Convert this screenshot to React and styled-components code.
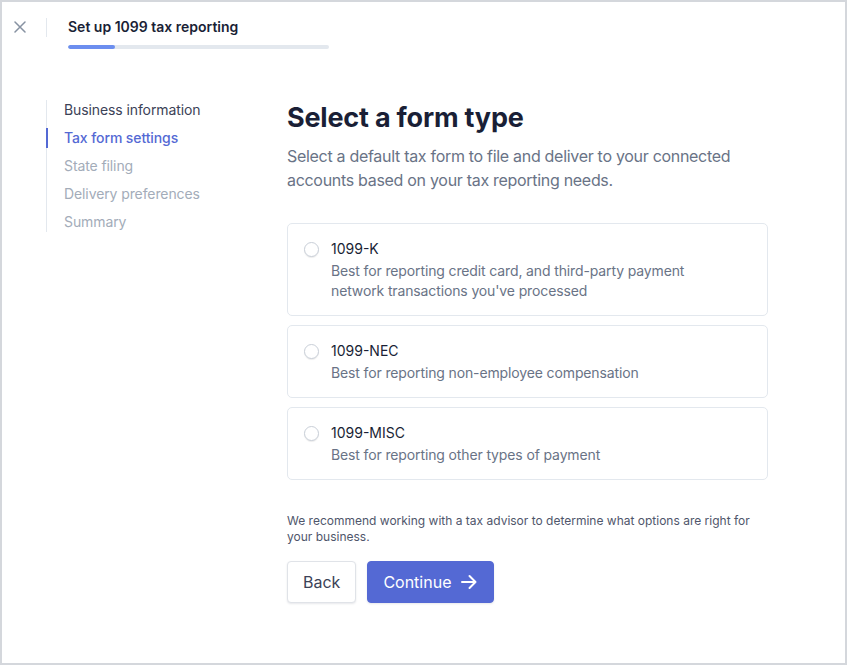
import styled, { createGlobalStyle } from "styled-components";

const GlobalStyle = createGlobalStyle`
  * { box-sizing: border-box; }
  body {
    margin: 0;
    font-family: Inter, "Noto Sans", "Liberation Sans", sans-serif;
    color: #1a1f36;
    background: #fff;
  }
`;

const steps = [
  { label: "Business information", state: "done" },
  { label: "Tax form settings", state: "active" },
  { label: "State filing", state: "todo" },
  { label: "Delivery preferences", state: "todo" },
  { label: "Summary", state: "todo" },
];

const forms = [
  {
    name: "1099-K",
    text: "Best for reporting credit card, and third-party payment network transactions you've processed",
  },
  { name: "1099-NEC", text: "Best for reporting non-employee compensation" },
  { name: "1099-MISC", text: "Best for reporting other types of payment" },
];

export default function App() {
  return (
    <>
      <GlobalStyle />
      <Frame>
        <Header>
          <CloseButton aria-label="Close">
            <svg width="12" height="12" viewBox="0 0 12 12">
              <path d="M1 1L11 11M11 1L1 11" stroke="#8792a2" strokeWidth="1.5" strokeLinecap="round" />
            </svg>
          </CloseButton>
          <Divider />
          <TitleBlock>
            <Title>Set up 1099 tax reporting</Title>
            <Progress>
              <ProgressFill style={{ width: "18%" }} />
            </Progress>
          </TitleBlock>
        </Header>

        <Body>
          <StepList>
            {steps.map((s) => (
              <Step key={s.label} $state={s.state}>
                {s.label}
              </Step>
            ))}
          </StepList>

          <Main>
            <Heading>Select a form type</Heading>
            <Lead>
              Select a default tax form to file and deliver to your connected
              accounts based on your tax reporting needs.
            </Lead>

            <Options>
              {forms.map((f) => (
                <Option key={f.name}>
                  <Radio type="radio" name="form" />
                  <OptionText>
                    <OptionName>{f.name}</OptionName>
                    <OptionDesc>{f.text}</OptionDesc>
                  </OptionText>
                </Option>
              ))}
            </Options>

            <Note>
              We recommend working with a tax advisor to determine what options
              are right for your business.
            </Note>

            <Actions>
              <Button>Back</Button>
              <Button $primary>
                Continue
                <svg width="18" height="18" viewBox="0 0 18 18">
                  <path
                    d="M2 9H15.5M9.5 3L15.5 9L9.5 15"
                    fill="none"
                    stroke="#fff"
                    strokeWidth="2"
                    strokeLinecap="round"
                    strokeLinejoin="round"
                  />
                </svg>
              </Button>
            </Actions>
          </Main>
        </Body>
      </Frame>
    </>
  );
}

const Frame = styled.div`
  width: 847px;
  height: 665px;
  border: 2px solid #d4d7dc;
  background: #fff;
`;

const Header = styled.header`
  display: flex;
  align-items: flex-start;
  padding: 15px 0 0 12px;
`;

const CloseButton = styled.button`
  border: 0;
  background: none;
  padding: 0;
  width: 12px;
  height: 20px;
  display: flex;
  align-items: center;
  margin-right: 20px;
`;

const Divider = styled.div`
  width: 1px;
  height: 19px;
  margin-top: 1px;
  background: #e3e8ee;
  margin-right: 21px;
`;

const TitleBlock = styled.div`
  display: flex;
  flex-direction: column;
  gap: 8px;
`;

const Title = styled.h1`
  margin: 0;
  font-size: 14px;
  line-height: 20px;
  font-weight: 600;
  color: #1a1f36;
`;

const Progress = styled.div`
  width: 261px;
  height: 4px;
  border-radius: 2px;
  background: #e3e8ee;
  overflow: hidden;
`;

const ProgressFill = styled.div`
  height: 100%;
  background: #6c8eef;
  border-radius: 2px;
`;

const Body = styled.div`
  display: grid;
  grid-template-columns: 241px 481px;
  padding: 51px 0 0 44px;
`;

const StepList = styled.nav`
  align-self: start;
  display: flex;
  flex-direction: column;
  gap: 8px;
  border-left: 1px solid #e3e8ee;
`;

const Step = styled.div`
  margin-left: -1px;
  border-left: 2px solid ${(p) => (p.$state === "active" ? "#5469d4" : "transparent")};
  padding-left: 16px;
  font-size: 14px;
  line-height: 20px;
  letter-spacing: -0.1px;
  color: ${(p) =>
    p.$state === "active" ? "#5469d4" : p.$state === "done" ? "#3c4257" : "#a3acb9"};
  font-weight: ${(p) => (p.$state === "active" ? 500 : 400)};
`;

const Main = styled.main`
  display: flex;
  flex-direction: column;
`;

const Heading = styled.h2`
  margin: 0;
  font-size: 27px;
  line-height: 36px;
  font-weight: 700;
  color: #1a1f36;
  letter-spacing: -0.2px;
`;

const Lead = styled.p`
  margin: 8px 0 0;
  font-size: 16px;
  line-height: 24px;
  letter-spacing: -0.3px;
  color: #697386;
`;

const Options = styled.div`
  margin-top: 31px;
  display: flex;
  flex-direction: column;
  gap: 9px;
`;

const Option = styled.label`
  display: flex;
  align-items: flex-start;
  gap: 12px;
  padding: 15px 16px 14px 16px;
  border: 1px solid #e3e8ee;
  border-radius: 5px;
  cursor: pointer;
`;

const Radio = styled.input`
  appearance: none;
  margin: 3px 0 0 0;
  width: 15px;
  height: 15px;
  border-radius: 50%;
  border: 1px solid #c9cfd8;
  box-shadow: 0 1px 1px rgba(0, 0, 0, 0.08);
  background: #fff;
  flex-shrink: 0;
`;

const OptionText = styled.div`
  display: flex;
  flex-direction: column;
  gap: 2px;
`;

const OptionName = styled.div`
  font-size: 14px;
  line-height: 20px;
  font-weight: 400;
  color: #1a1f36;
`;

const OptionDesc = styled.div`
  font-size: 14px;
  line-height: 20px;
  letter-spacing: -0.13px;
  color: #697386;
  max-width: 370px;
`;

const Note = styled.p`
  margin: 33px 0 0;
  font-size: 12px;
  line-height: 16px;
  color: #4f566b;
`;

const Actions = styled.div`
  display: flex;
  gap: 11px;
  margin-top: 16px;
`;

const Button = styled.button`
  display: inline-flex;
  align-items: center;
  gap: 9px;
  height: 42px;
  padding: 0 15px;
  border-radius: 4px;
  font-family: inherit;
  font-size: 16px;
  font-weight: 400;
  cursor: pointer;
  border: 1px solid ${(p) => (p.$primary ? "#5469d4" : "#e0e3e8")};
  background: ${(p) => (p.$primary ? "#5469d4" : "#fff")};
  color: ${(p) => (p.$primary ? "#fff" : "#3c4257")};
  box-shadow: 0 1px 2px rgba(60, 66, 87, 0.12);
`;
